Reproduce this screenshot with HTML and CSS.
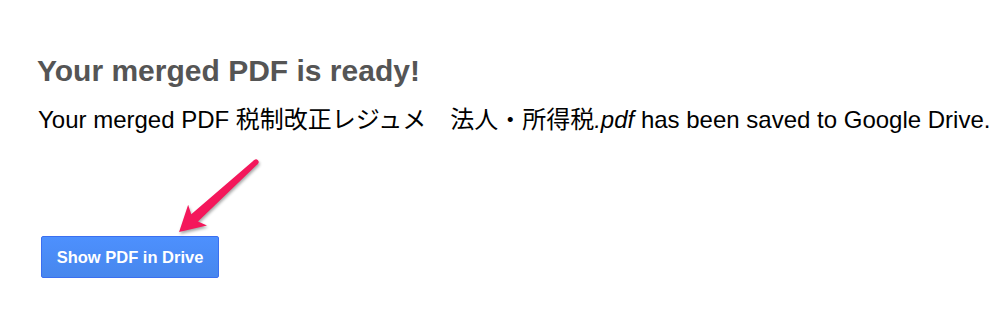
FILE: index.html
```html
<!DOCTYPE html>
<html>
<head>
<meta charset="utf-8">
<link rel="stylesheet" href="styles.css">
</head>
<body>
<div class="page">
  <h1 class="title">Your merged PDF is ready!</h1>
  <p class="message">Your merged PDF 税制改正レジュメ　法人・所得税<em>.pdf</em> has been saved to Google Drive.</p>
  <div class="actions">
    <button class="btn">Show PDF in Drive</button>
  </div>
</div>
<svg class="arrow" width="1006" height="330" viewBox="0 0 1006 330">
  <g transform="translate(256,162) rotate(137.7)">
    <polygon points="0,-2.6 83,-5 79,-14 104,0 79,14 83,5 0,2.6" fill="#f4175b"/>
    <circle cx="0" cy="0" r="2.6" fill="#f4175b"/>
  </g>
</svg>
</body>
</html>
```
FILE: styles.css
```css
html, body {
  margin: 0;
  padding: 0;
  background: #fff;
}
body {
  font-family: "Liberation Sans", Arial, "Noto Sans CJK JP", sans-serif;
  width: 1006px;
  height: 330px;
  overflow: hidden;
  position: relative;
}
.page {
  padding: 53px 0 0 37px;
}
.title {
  margin: 0;
  font-size: 30px;
  font-weight: bold;
  color: #555;
  line-height: 36px;
}
.message {
  margin: 16px 0 0 1px;
  font-size: 24px;
  line-height: 30px;
  color: #000;
  white-space: nowrap;
}
.message em {
  font-style: italic;
}
.actions {
  margin-top: 101px;
  padding-left: 4px;
}
.btn {
  width: 178px;
  height: 42px;
  box-sizing: border-box;
  border: 1px solid #3b6ff0;
  border-radius: 2px;
  background: linear-gradient(#4d90fe, #4787ed);
  color: #fff;
  font-family: "Liberation Sans", Arial, sans-serif;
  font-size: 16.5px;
  font-weight: bold;
  padding: 0;
  cursor: pointer;
}
.arrow {
  position: absolute;
  left: 0;
  top: 0;
  filter: drop-shadow(1px 2px 1.5px rgba(0,0,0,0.35));
  pointer-events: none;
}
```
